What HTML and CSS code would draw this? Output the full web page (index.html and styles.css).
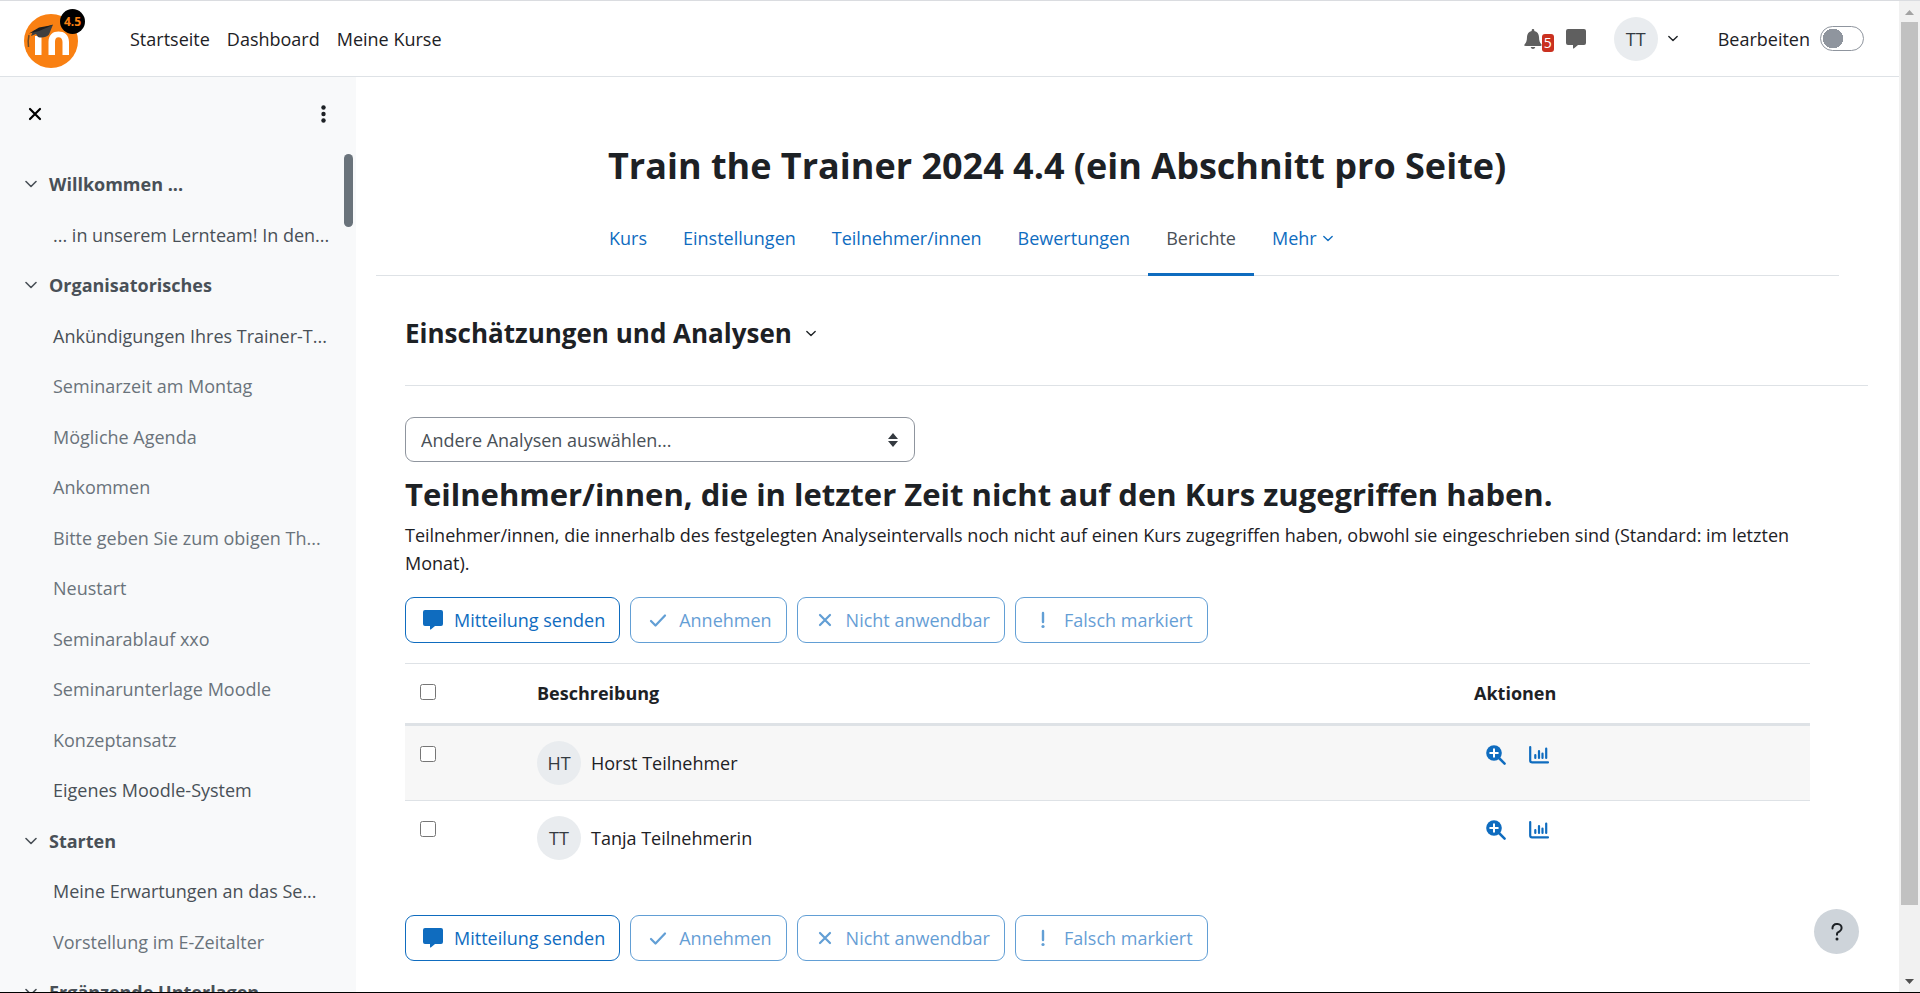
FILE: index.html
```
<!DOCTYPE html>
<html lang="de">
<head>
<meta charset="utf-8">
<title>Train the Trainer 2024 4.4: Einschätzungen und Analysen</title>
<link rel="stylesheet" href="styles.css">
</head>
<body>
<svg class="sprite" aria-hidden="true">
  <symbol id="chevron" viewBox="0 0 12 8"><path d="M1 1.500l5 5 5-5" fill="none" stroke="currentColor" stroke-width="1.600" stroke-linecap="round" stroke-linejoin="round"/></symbol>
  <symbol id="comment" viewBox="0 0 20 20"><path d="M2 0h16a2 2 0 0 1 2 2v12a2 2 0 0 1-2 2h-6l-4.200 3.400c-.4.300-.8.100-.8-.400V16H2a2 2 0 0 1-2-2V2a2 2 0 0 1 2-2z" fill="currentColor"/></symbol>
  <symbol id="check" viewBox="0 0 20 20"><path d="M3 11l4.500 4.500 9.500-10" fill="none" stroke="currentColor" stroke-width="2.200" stroke-linecap="round" stroke-linejoin="round"/></symbol>
  <symbol id="cross" viewBox="0 0 20 20"><path d="M5 5l10 10M15 5l-10 10" fill="none" stroke="currentColor" stroke-width="2.200" stroke-linecap="round"/></symbol>
  <symbol id="exclaim" viewBox="0 0 20 20"><path d="M10 3v9" stroke="currentColor" stroke-width="2.400" stroke-linecap="round"/><circle cx="10" cy="16.500" r="1.600" fill="currentColor"/></symbol>
  <symbol id="zoom-in" viewBox="0 0 20 20"><path d="M13 13l5.600 5.600" stroke="currentColor" stroke-width="2.500" stroke-linecap="round"/><circle cx="8" cy="8" r="7.800" fill="currentColor"/><path d="M8 4.200v7.600M4.200 8h7.600" stroke="#fff" stroke-width="2" stroke-linecap="round"/></symbol>
  <symbol id="chart" viewBox="0 0 20 20"><path d="M1.200 2v13.500a1.800 1.800 0 0 0 1.800 1.800h16" fill="none" stroke="currentColor" stroke-width="2.200" stroke-linecap="round"/><path d="M6.300 10v3M10 6v7M13.500 8.500v4.500M17.200 3.500v9.500" stroke="currentColor" stroke-width="2.200" stroke-linecap="round"/></symbol>
</svg>
<div class="window">
  <div class="app">
    <header class="topbar">
      <a class="brand" href="#" aria-label="Startseite">
        <svg class="logo" viewBox="0 0 62 60">
          <circle cx="27" cy="32" r="27" fill="#f98012"/>
          <path d="M11 46V27h6.500v19zM24.500 46V33c0-7.500 4.500-10.500 10-10.500S45 25.500 45 33v13h-6.500V33c0-3-1.500-4.700-4-4.700S31 30 31 33v13z" fill="#fff"/>
          <path d="M7 27l2-5 20-6.500-4 10c-2 2.500-7 4-11 2.500l-2-3z" fill="#3f3f3f"/>
          <path d="M5 26c-1 4-1 8-.5 12" fill="none" stroke="#6b4a26" stroke-width="1.500"/>
          <path d="M5 24.500L15 22l14-6-14 2.500z" fill="#1f1f1f"/>
          <circle cx="48.500" cy="12.500" r="12.500" fill="#000"/>
          <text class="logo-version" x="48.500" y="17" text-anchor="middle">4.5</text>
        </svg>
      </a>
      <nav class="primary-nav">
        <a href="#">Startseite</a>
        <a href="#">Dashboard</a>
        <a href="#">Meine Kurse</a>
      </nav>
      <div class="user-tools">
        <button class="plain bell" aria-label="Mitteilungen, 5 neue">
          <svg class="bell-icon" viewBox="0 0 18 20"><path d="M9 0c.9 0 1.300.6 1.300 1.400v.5C13.200 2.500 15 4.800 15 8c0 4 .9 5.600 2.300 7.200.8 1 .2 1.800-.8 1.800h-15c-1 0-1.600-.8-.8-1.800C2.100 13.600 3 12 3 8c0-3.200 1.800-5.500 4.700-6.100v-.5C7.700.6 8.100 0 9 0zM6.700 18h4.600c-.3 1.200-1.200 1.900-2.300 1.900S7 19.200 6.700 18z" fill="currentColor"/></svg>
          <span class="badge">5</span>
        </button>
        <button class="plain messages" aria-label="Nachrichten"><svg class="icon"><use href="#comment"/></svg></button>
        <button class="plain user-menu" aria-label="Nutzermenü"><span class="avatar">TT</span><svg class="chev small"><use href="#chevron"/></svg></button>
        <label class="edit-mode">Bearbeiten<input type="checkbox" role="switch" class="switch"></label>
      </div>
    </header>
    <div class="body">
      <aside class="drawer">
        <div class="drawer-head">
          <button class="plain" aria-label="Schließen"><svg class="icon close"><use href="#cross"/></svg></button>
          <button class="plain" aria-label="Optionen"><svg class="dots" viewBox="0 0 5 18"><circle cx="2.500" cy="2.500" r="2.200"/><circle cx="2.500" cy="9" r="2.200"/><circle cx="2.500" cy="15.500" r="2.200"/></svg></button>
        </div>
        <div class="drawer-scroll">
          <nav class="index">
            <a class="section" href="#"><svg class="chev"><use href="#chevron"/></svg>Willkommen ...</a>
            <a class="entry" href="#">... in unserem Lernteam! In den...</a>
            <a class="section" href="#"><svg class="chev"><use href="#chevron"/></svg>Organisatorisches</a>
            <a class="entry" href="#">Ankündigungen Ihres Trainer-T...</a>
            <a class="entry dim" href="#">Seminarzeit am Montag</a>
            <a class="entry dim" href="#">Mögliche Agenda</a>
            <a class="entry dim" href="#">Ankommen</a>
            <a class="entry dim" href="#">Bitte geben Sie zum obigen Th...</a>
            <a class="entry dim" href="#">Neustart</a>
            <a class="entry dim" href="#">Seminarablauf xxo</a>
            <a class="entry dim" href="#">Seminarunterlage Moodle</a>
            <a class="entry dim" href="#">Konzeptansatz</a>
            <a class="entry" href="#">Eigenes Moodle-System</a>
            <a class="section" href="#"><svg class="chev"><use href="#chevron"/></svg>Starten</a>
            <a class="entry" href="#">Meine Erwartungen an das Se...</a>
            <a class="entry dim" href="#">Vorstellung im E-Zeitalter</a>
            <a class="section" href="#"><svg class="chev"><use href="#chevron"/></svg>Ergänzende Unterlagen</a>
          </nav>
          <div class="drawer-bar"></div>
        </div>
      </aside>
      <main class="page">
        <h1 class="course-title">Train the Trainer 2024 4.4 (ein Abschnitt pro Seite)</h1>
        <nav class="tabs">
          <a href="#">Kurs</a>
          <a href="#">Einstellungen</a>
          <a href="#">Teilnehmer/innen</a>
          <a href="#">Bewertungen</a>
          <a class="active" href="#" aria-current="page">Berichte</a>
          <a href="#">Mehr<svg class="chev small"><use href="#chevron"/></svg></a>
        </nav>
        <div class="report-head">
          <button class="plain report-menu">Einschätzungen und Analysen<svg class="chev small"><use href="#chevron"/></svg></button>
        </div>
        <div class="content">
          <div class="select-wrap">
            <select class="select" aria-label="Andere Analysen"><option>Andere Analysen auswählen...</option></select>
            <svg class="sorter" viewBox="0 0 10 14"><path d="M5 0l5 6H0zM5 14l5-6H0z"/></svg>
          </div>
          <h2 class="insight-title">Teilnehmer/innen, die in letzter Zeit nicht auf den Kurs zugegriffen haben.</h2>
          <p class="lead">Teilnehmer/innen, die innerhalb des festgelegten Analyseintervalls noch nicht auf einen Kurs zugegriffen haben, obwohl sie eingeschrieben sind (Standard: im letzten Monat).</p>
          <div class="actions">
            <button class="btn"><svg class="icon"><use href="#comment"/></svg>Mitteilung senden</button>
            <button class="btn" disabled><svg class="icon"><use href="#check"/></svg>Annehmen</button>
            <button class="btn" disabled><svg class="icon"><use href="#cross"/></svg>Nicht anwendbar</button>
            <button class="btn" disabled><svg class="icon"><use href="#exclaim"/></svg>Falsch markiert</button>
          </div>
          <table class="insights">
            <thead>
              <tr><th class="col-pick"><input type="checkbox" aria-label="Alle auswählen"></th><th>Beschreibung</th><th class="col-actions">Aktionen</th></tr>
            </thead>
            <tbody>
              <tr>
                <td><input type="checkbox" aria-label="Horst Teilnehmer auswählen"></td>
                <td><a class="person" href="#"><span class="avatar">HT</span>Horst Teilnehmer</a></td>
                <td><div class="row-actions"><a href="#" aria-label="Details"><svg class="icon"><use href="#zoom-in"/></svg></a><a href="#" aria-label="Bericht"><svg class="icon"><use href="#chart"/></svg></a></div></td>
              </tr>
              <tr>
                <td><input type="checkbox" aria-label="Tanja Teilnehmerin auswählen"></td>
                <td><a class="person" href="#"><span class="avatar">TT</span>Tanja Teilnehmerin</a></td>
                <td><div class="row-actions"><a href="#" aria-label="Details"><svg class="icon"><use href="#zoom-in"/></svg></a><a href="#" aria-label="Bericht"><svg class="icon"><use href="#chart"/></svg></a></div></td>
              </tr>
            </tbody>
          </table>
          <div class="actions">
            <button class="btn"><svg class="icon"><use href="#comment"/></svg>Mitteilung senden</button>
            <button class="btn" disabled><svg class="icon"><use href="#check"/></svg>Annehmen</button>
            <button class="btn" disabled><svg class="icon"><use href="#cross"/></svg>Nicht anwendbar</button>
            <button class="btn" disabled><svg class="icon"><use href="#exclaim"/></svg>Falsch markiert</button>
          </div>
        </div>
      </main>
    </div>
    <button class="help" aria-label="Hilfe"><svg class="icon" viewBox="0 0 20 20"><path d="M5.500 6.500V6a4 4 0 0 1 4-4h1.200a4 4 0 0 1 3.900 4c0 1.500-.8 2.700-2 3.400L11 10.300c-.7.400-1 1-1 1.700v.8" fill="none" stroke="currentColor" stroke-width="2" stroke-linecap="round"/><circle cx="10" cy="17" r="1.500" fill="currentColor"/></svg></button>
  </div>
  <div class="scrollbar" aria-hidden="true">
    <svg class="arrow light" viewBox="0 0 9 5"><path d="M0 5l4.500-5L9 5z"/></svg>
    <div class="thumb"></div>
    <div class="track-rest"></div>
    <svg class="arrow" viewBox="0 0 9 5"><path d="M0 0l4.500 5L9 0z"/></svg>
  </div>
</div>
</body>
</html>
```
FILE: styles.css
```
* { box-sizing: border-box; }
body {
  margin: 0;
  color: #1d2125;
  background: #fff;
  font: 18px/28px "Open Sans", "Noto Sans", sans-serif;
}
a { color: inherit; text-decoration: none; }
.sprite { position: absolute; width: 0; height: 0; }
.icon { width: 20px; height: 20px; flex: none; }
.chev { width: 12px; height: 8px; flex: none; }
.small { width: 10px; height: 7px; }
.plain {
  display: flex;
  align-items: center;
  padding: 0;
  border: 0;
  background: none;
  color: inherit;
  font: inherit;
  cursor: pointer;
}
.avatar {
  display: flex;
  align-items: center;
  justify-content: center;
  width: 44px;
  height: 44px;
  flex: none;
  border-radius: 50%;
  background: #e9ecef;
  color: #343a40;
}

.window {
  display: flex;
  height: 100vh;
  overflow: hidden;
  border-top: 1px solid #dadce0;
  border-bottom: 1px solid #000;
}
.app {
  position: relative;
  display: flex;
  flex-direction: column;
  flex: 1;
  min-width: 0;
}

/* Top bar */
.topbar {
  display: flex;
  align-items: center;
  flex: none;
  height: 76px;
  padding: 0 35px 0 24px;
  border-bottom: 1px solid #dee2e6;
}
.brand { display: flex; margin-right: 44px; }
.logo { width: 62px; height: 60px; }
.logo-version { fill: #f98012; font: bold 12px "Open Sans", sans-serif; }
.primary-nav { display: flex; gap: 17px; }
.user-tools { display: flex; align-items: center; margin-left: auto; }
.bell, .messages { color: #5f5f5f; }
.bell-icon { width: 18px; height: 20px; }
.badge {
  width: 12px;
  margin-top: 8px;
  border-radius: 3px;
  background: #ca3120;
  color: #fff;
  font-size: 14px;
  line-height: 18px;
  text-align: center;
}
.messages { margin-left: 12px; }
.user-menu { gap: 10px; margin: 0 40px 0 28px; }
.edit-mode { display: flex; align-items: center; gap: 10px; }
.switch {
  appearance: none;
  width: 44px;
  height: 25px;
  margin: 0;
  border: 1px solid #8f959e;
  border-radius: 13px;
  background: radial-gradient(circle 10px at 12px 50%, #8f959e 10px, transparent 10px) #fff;
}

/* Course index */
.body { display: flex; flex: 1; min-height: 0; }
.drawer {
  display: flex;
  flex-direction: column;
  width: 356px;
  flex: none;
  background: #f8f9fa;
}
.drawer-head {
  display: flex;
  align-items: center;
  justify-content: space-between;
  height: 74px;
  flex: none;
  padding: 0 30px 0 25px;
}
.close { color: #000; }
.dots { width: 5px; height: 18px; fill: #1d2125; }
.drawer-scroll { display: flex; flex: 1; min-height: 0; overflow: hidden; }
.index {
  display: grid;
  grid-auto-rows: 50px 51px;
  flex: 1;
  min-width: 0;
  padding-top: 8px;
  color: #495057;
}
.index a { display: flex; align-items: center; white-space: nowrap; }
.section { gap: 12px; padding-left: 25px; font-weight: 700; }
.entry { padding-left: 53px; }
.dim { color: #6a737b; }
.drawer-bar {
  width: 9px;
  height: 73px;
  margin: 3px 3px 0 0;
  border-radius: 5px;
  background: #6a737b;
}

/* Page */
.page { flex: 1; min-width: 0; overflow: hidden; }
.course-title { margin: 64px 0 0 252px; font-size: 36px; line-height: 50px; }
.tabs {
  display: flex;
  margin: 16px 60px 0 20px;
  padding-left: 215px;
  border-bottom: 1px solid #dee2e6;
  color: #0f6cbf;
}
.tabs a {
  display: flex;
  align-items: center;
  gap: 6px;
  height: 69px;
  padding: 0 18px 4px;
  border-bottom: 3px solid transparent;
  margin-bottom: -1px;
}
.tabs .active { border-color: #0f6cbf; color: #495057; }
.report-head {
  display: flex;
  margin: 0 31px 0 49px;
  padding: 43px 0 38px;
  border-bottom: 1px solid #dee2e6;
}
.report-menu { gap: 14px; font-size: 26px; font-weight: 700; }
.content { margin: 31px 89px 0 49px; }
.select-wrap { display: grid; align-items: center; width: 510px; }
.select-wrap > * { grid-area: 1 / 1; }
.select {
  appearance: none;
  width: 100%;
  height: 45px;
  padding: 0 15px;
  border: 1px solid #8f959e;
  border-radius: 9px;
  background: #fff;
  color: #495057;
  font: inherit;
}
.sorter { width: 10px; height: 14px; margin-right: 17px; justify-self: end; fill: #343a40; pointer-events: none; }
.insight-title { margin: 10px 0 5px; font-size: 31px; line-height: 44px; }
.lead { margin: 0 0 20px; }
.actions { display: flex; gap: 10px; }
.btn {
  display: flex;
  align-items: center;
  gap: 11px;
  height: 46px;
  padding: 0 14px 0 17px;
  border: 1px solid #0f6cbf;
  border-radius: 9px;
  background: #fff;
  color: #0f6cbf;
  font: inherit;
  white-space: nowrap;
}
.btn:disabled { opacity: 0.65; }

.insights {
  width: 100%;
  margin: 20px 0 40px;
  border-collapse: separate;
  border-spacing: 0;
  table-layout: fixed;
}
.insights th, .insights td {
  padding: 15px;
  border-top: 1px solid #dee2e6;
  text-align: left;
  vertical-align: top;
}
.insights th { height: 63px; border-bottom: 3px solid #dee2e6; }
.insights tbody tr:first-child td { border-top: 0; }
.insights tbody tr:nth-child(odd) { background: #f7f7f7; }
.col-pick { width: 117px; }
.col-actions { width: 351px; }
.insights input { display: block; width: 16px; height: 16px; margin: 5px 0 0; }
.person { display: flex; align-items: center; gap: 10px; }
.row-actions { display: flex; gap: 23px; padding: 4px 0 0 12px; color: #0f6cbf; }
.row-actions a { display: flex; }

.help {
  position: absolute;
  right: 40px;
  bottom: 38px;
  display: flex;
  align-items: center;
  justify-content: center;
  width: 45px;
  height: 45px;
  padding: 0;
  border: 0;
  border-radius: 50%;
  background: #ced4da;
  color: #1d2125;
}

.scrollbar {
  display: flex;
  flex-direction: column;
  align-items: center;
  width: 21px;
  flex: none;
  padding: 9px 0 8px;
  background: #f1f1f1;
}
.arrow { width: 9px; height: 5px; flex: none; fill: #505050; }
.light { fill: #a3a3a3; }
.thumb { width: 17px; flex: 12; margin-top: 7px; background: #c1c1c1; }
.track-rest { flex: 1; }
```
